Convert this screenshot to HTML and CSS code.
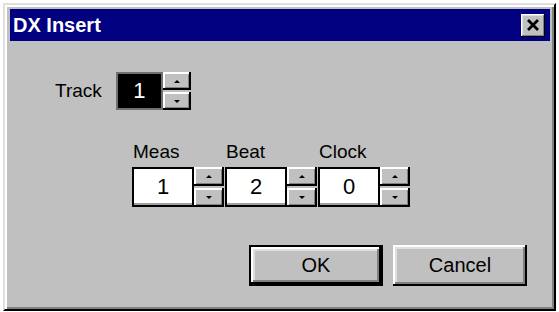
FILE: index.html
```html
<!DOCTYPE html>
<html lang="en">
<head>
    <meta charset="UTF-8">
    <meta name="viewport" content="width=device-width, initial-scale=1.0">
    <title>DX Insert</title>
    <link rel="stylesheet" href="styles.css">
</head>
<body>
    <div class="window">
        <div class="titlebar">
            <span class="title">DX Insert</span>
            <button class="close-btn">
                <svg width="14" height="12" viewBox="0 0 14 12">
                    <path d="M2 1 L12 11 M12 1 L2 11" stroke="#000" stroke-width="2.8" fill="none"/>
                </svg>
            </button>
        </div>

        <div class="dialog-body">
            <div class="track-row">
                <span class="label">Track</span>
                <div class="spin-field spin-track">
                    <div class="field field-dark">1</div>
                    <div class="spinner">
                        <div class="spin-btn"><span class="arrow-up"></span></div>
                        <div class="spin-btn"><span class="arrow-down"></span></div>
                    </div>
                </div>
            </div>

            <div class="time-row">
                <div class="time-group">
                    <div class="label">Meas</div>
                    <div class="spin-field">
                        <div class="field">1</div>
                        <div class="spinner">
                            <div class="spin-btn"><span class="arrow-up"></span></div>
                            <div class="spin-btn"><span class="arrow-down"></span></div>
                        </div>
                    </div>
                </div>
                <div class="time-group">
                    <div class="label">Beat</div>
                    <div class="spin-field">
                        <div class="field">2</div>
                        <div class="spinner">
                            <div class="spin-btn"><span class="arrow-up"></span></div>
                            <div class="spin-btn"><span class="arrow-down"></span></div>
                        </div>
                    </div>
                </div>
                <div class="time-group">
                    <div class="label">Clock</div>
                    <div class="spin-field">
                        <div class="field">0</div>
                        <div class="spinner">
                            <div class="spin-btn"><span class="arrow-up"></span></div>
                            <div class="spin-btn"><span class="arrow-down"></span></div>
                        </div>
                    </div>
                </div>
            </div>

            <div class="button-row">
                <button class="btn btn-default">OK</button>
                <button class="btn">Cancel</button>
            </div>
        </div>
    </div>
</body>
</html>
```

FILE: styles.css
```css
body {
    margin: 0;
    background-color: #ffffff;
    font-family: "Liberation Sans", Arial, sans-serif;
}

.window {
    margin: 3px;
    width: 553px;
    height: 308px;
    box-sizing: border-box;
    background-color: #c0c0c0;
    border: 2px solid;
    border-color: #dfdfdf #000000 #000000 #dfdfdf;
    box-shadow: inset 2px 2px #ffffff, inset -2px -2px #808080;
    padding: 4px 4px 4px 5px;
}

.titlebar {
    height: 32px;
    background-color: #000080;
    display: flex;
    align-items: center;
    justify-content: space-between;
    padding: 0 5px 0 3px;
}

.title {
    color: #ffffff;
    font-weight: bold;
    font-size: 20px;
}

.close-btn {
    width: 24px;
    height: 23px;
    padding: 0;
    border: none;
    background-color: #c0c0c0;
    box-shadow: inset -1px -1px #000000, inset 1px 1px #ffffff, inset -2px -2px #808080, inset 2px 2px #dfdfdf;
    display: flex;
    align-items: center;
    justify-content: center;
}

.dialog-body {
    padding: 31px 23px 0 45px;
}

.label {
    font-size: 19px;
    line-height: 22px;
    color: #000000;
}

.track-row {
    display: flex;
    align-items: center;
    height: 38px;
}

.track-row .label {
    margin-right: 14px;
}

.spin-field {
    display: flex;
    height: 40px;
}

.spin-track {
    height: 38px;
}

.field {
    width: 62px;
    box-sizing: border-box;
    background-color: #ffffff;
    border: 2px solid #000000;
    box-shadow: inset 0 -2px #a0a0a0;
    display: flex;
    align-items: center;
    justify-content: center;
    font-size: 22px;
    color: #000000;
}

.field-dark {
    width: 47px;
    background-color: #000000;
    color: #ffffff;
    border-color: #707070;
    box-shadow: none;
}

.spinner {
    width: 30px;
    display: flex;
    flex-direction: column;
    justify-content: space-between;
}

.spin-track .spinner {
    width: 28px;
}

.spin-btn {
    height: 19px;
    background-color: #c0c0c0;
    box-shadow: inset -2px -2px #000000, inset 2px 2px #ffffff, inset -3px -3px #808080;
    display: flex;
    align-items: center;
    justify-content: center;
}

.spin-track .spin-btn {
    height: 18px;
}

.arrow-up {
    width: 0;
    height: 0;
    border-left: 3px solid transparent;
    border-right: 3px solid transparent;
    border-bottom: 3px solid #000000;
}

.arrow-down {
    width: 0;
    height: 0;
    border-left: 3px solid transparent;
    border-right: 3px solid transparent;
    border-top: 3px solid #000000;
}

.time-row {
    display: flex;
    margin: 31px 0 0 77px;
}

.time-group {
    display: flex;
    flex-direction: column;
    margin-right: 1px;
}

.time-group .label {
    padding-left: 1px;
    margin-bottom: 4px;
}

.button-row {
    display: flex;
    justify-content: flex-end;
    gap: 10px;
    margin-top: 38px;
}

.btn {
    width: 134px;
    height: 41px;
    box-sizing: border-box;
    padding: 0;
    border: none;
    background-color: #c0c0c0;
    font-family: "Liberation Sans", Arial, sans-serif;
    font-size: 20px;
    color: #000000;
    box-shadow: inset -2px -2px #000000, inset 2px 2px #ffffff, inset -4px -4px #808080, inset 4px 4px #dfdfdf;
}

.btn-default {
    border: 2px solid #000000;
}
```
